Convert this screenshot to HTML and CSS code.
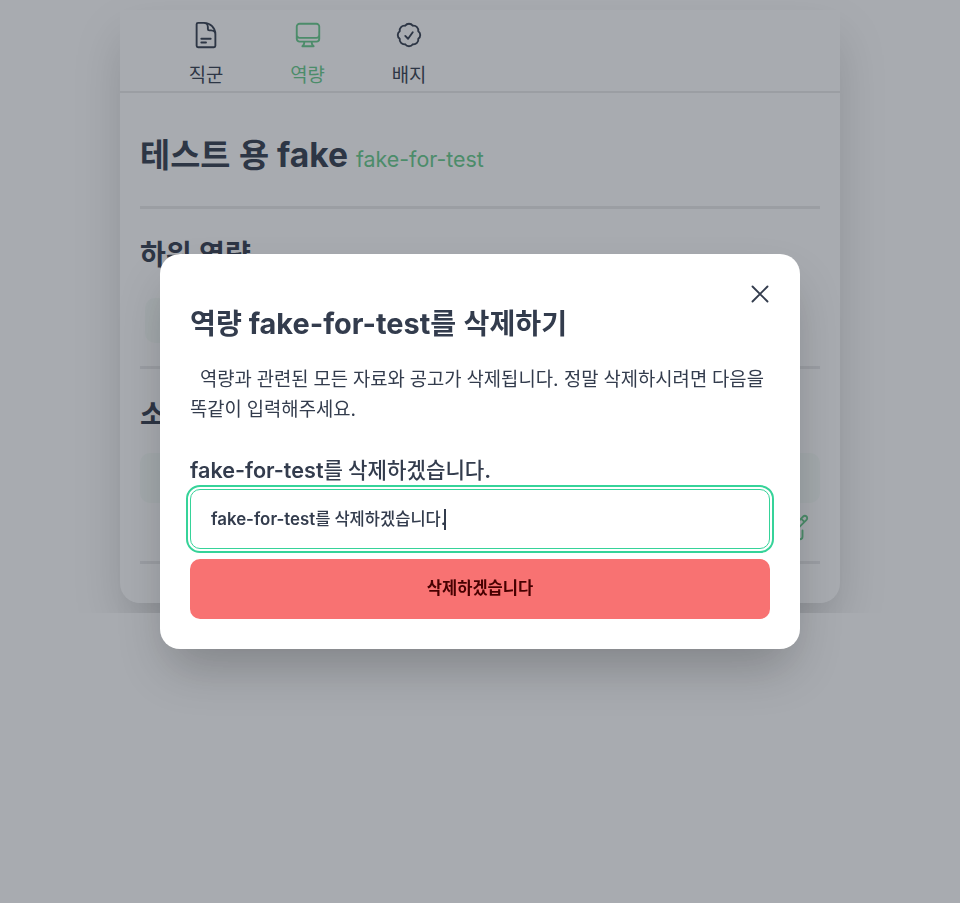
FILE: index.html
```html
<!DOCTYPE html>
<html lang="ko">
<head>
<meta charset="utf-8">
<title>역량</title>
<link rel="stylesheet" href="styles.css">
</head>
<body>
<div class="page">
  <main class="card">
    <nav class="tabs">
      <a class="tab">
        <svg class="icon" viewBox="0 0 24 24"><path d="M19.5 14.25v-2.625a3.375 3.375 0 00-3.375-3.375h-1.5A1.125 1.125 0 0113.5 7.125v-1.5a3.375 3.375 0 00-3.375-3.375H8.25m0 12.75h7.5m-7.5 3H12M10.5 2.25H5.625c-.621 0-1.125.504-1.125 1.125v17.25c0 .621.504 1.125 1.125 1.125h12.75c.621 0 1.125-.504 1.125-1.125V11.25a9 9 0 00-9-9z"/></svg>
        <span class="ko">직군</span>
      </a>
      <a class="tab active">
        <svg class="icon" viewBox="0 0 24 24"><path d="M9 17.25v1.007a3 3 0 01-.879 2.122L7.5 21h9l-.621-.621A3 3 0 0115 18.257V17.25m6-12V15a2.25 2.25 0 01-2.25 2.25H5.25A2.25 2.25 0 013 15V5.25m18 0A2.25 2.25 0 0018.75 3H5.25A2.25 2.25 0 003 5.25m18 0V12a2.25 2.25 0 01-2.25 2.25H5.25A2.25 2.25 0 013 12V5.25"/></svg>
        <span class="ko">역량</span>
      </a>
      <a class="tab">
        <svg class="icon" viewBox="0 0 24 24"><path d="M9 12.75L11.25 15 15 9.75M21 12c0 1.268-.63 2.39-1.593 3.068a3.745 3.745 0 01-1.043 3.296 3.745 3.745 0 01-3.296 1.043A3.745 3.745 0 0112 21c-1.268 0-2.39-.63-3.068-1.593a3.746 3.746 0 01-3.296-1.043 3.745 3.745 0 01-1.043-3.296A3.745 3.745 0 013 12c0-1.268.63-2.39 1.593-3.068a3.745 3.745 0 011.043-3.296 3.746 3.746 0 013.296-1.043A3.746 3.746 0 0112 3c1.268 0 2.39.63 3.068 1.593a3.746 3.746 0 013.296 1.043 3.746 3.746 0 011.043 3.296A3.745 3.745 0 0121 12z"/></svg>
        <span class="ko">배지</span>
      </a>
    </nav>
    <header class="heading">
      <h1><span class="ko">테스트 용</span> fake</h1>
      <span class="slug">fake-for-test</span>
    </header>
    <section class="section children">
      <h2><span class="ko">하위 역량</span></h2>
      <div class="chip"></div>
    </section>
    <section class="section about">
      <h2><span class="ko">소개</span></h2>
      <div class="panel"></div>
      <svg class="icon edit" viewBox="0 0 24 24"><path d="M16.862 4.487l1.687-1.688a1.875 1.875 0 112.652 2.652L10.582 16.07a4.5 4.5 0 01-1.897 1.13L6 18l.8-2.685a4.5 4.5 0 011.13-1.897l8.932-8.931zm0 0L19.5 7.125M18 14v4.75A2.25 2.25 0 0115.75 21H5.25A2.25 2.25 0 013 18.75V8.25A2.25 2.25 0 015.25 6H10"/></svg>
    </section>
    <div class="rule"></div>
  </main>
</div>
<div class="overlay">
  <div class="modal" role="dialog">
    <svg class="icon close" viewBox="0 0 24 24"><path d="M6 18L18 6M6 6l12 12"/></svg>
    <h3><span class="ko">역량</span> fake-for-test<span class="ko">를 삭제하기</span></h3>
    <p><span class="ko">역량과 관련된 모든 자료와 공고가 삭제됩니다</span>. <span class="ko">정말 삭제하시려면 다음을</span><br><span class="ko">똑같이 입력해주세요</span>.</p>
    <div class="label">fake-for-test<span class="ko">를 삭제하겠습니다</span>.</div>
    <div class="input" role="textbox"><span>fake-for-test<span class="ko">를 삭제하겠습니다</span>.</span><i class="caret"></i></div>
    <button class="delete"><span class="ko">삭제하겠습니다</span></button>
  </div>
</div>
</body>
</html>
```

FILE: styles.css
```css
* { box-sizing: border-box; }
body {
  margin: 0;
  background: #fff;
  color: #333c4d;
  font: 400 19.2px/30px Inter, "Noto Sans CJK KR", sans-serif;
}
h1, h2, h3, p { margin: 0; }
.ko {
  font-family: "Noto Sans CJK KR", sans-serif;
  font-size: .98em;
  word-spacing: -.02em;
}
.icon {
  display: block;
  width: 30px;
  height: 30px;
  fill: none;
  stroke: currentColor;
  stroke-width: 1.5;
  stroke-linecap: round;
  stroke-linejoin: round;
}
.page { height: 613px; padding: 10px 120px; overflow: hidden; }
.card {
  height: 593px;
  border-radius: 0 0 20px 20px;
  background: #fff;
  box-shadow: 0 25px 50px -3px rgba(0, 0, 0, .18);
}
.tabs {
  display: flex;
  height: 83px;
  padding: 10px 35.3px 0;
  border-bottom: 2px solid #e9e9ea;
}
.tab {
  display: flex;
  flex-direction: column;
  align-items: center;
  gap: 9px;
  width: 101.5px;
}
.active, .slug, .edit { color: #66cc8a; }
.heading {
  display: flex;
  align-items: baseline;
  gap: 8px;
  height: 113px;
  margin: 0 20px;
  padding-top: 35px;
}
h1 { font-size: 33.6px; line-height: 50px; font-weight: 700; }
h1 .ko { font-size: .975em; word-spacing: -.02em; }
h3 .ko { font-size: .975em; }
.slug { font-size: 21.4px; }
.section { margin: 0 20px; border-top: 3px solid #e9e9ea; }
.section h2 { height: 40px; font-size: 28.7px; line-height: 40px; font-weight: 700; }
.children { height: 160px; padding-top: 24px; }
.chip { width: 120px; height: 45px; margin: 25px 5px 0; border-radius: 10px; background: #f6fcf8; }
.about { height: 195px; padding-top: 24px; }
.panel { height: 50px; margin-top: 20px; border-radius: 10px; background: #f6fcf8; }
.edit { margin: 10px 10px 0 auto; }
.rule { height: 3px; margin: 0 20px; background: #e9e9ea; }
.overlay {
  position: fixed;
  inset: 0;
  display: flex;
  align-items: center;
  justify-content: center;
  background: rgba(37, 45, 57, .4);
}
.modal {
  position: relative;
  width: 640px;
  height: 395px;
  padding: 48px 30px 30px;
  border-radius: 20px;
  background: #fff;
  box-shadow: 0 25px 50px -8px rgba(0, 0, 0, .24);
}
.close { position: absolute; top: 25px; right: 25px; }
.modal h3 { height: 40px; font-size: 28.9px; line-height: 40px; font-weight: 700; }
.modal p { height: 60px; margin-top: 22px; font-size: 19.2px; line-height: 30px; text-indent: 10px; white-space: nowrap; }
.modal p .ko { line-height: 1; }
.label { margin-top: 30px; height: 35px; font-size: 21.6px; font-weight: 600; }
.label .ko, .input .ko { font-weight: 500; word-spacing: -.04em; }
.input {
  display: flex;
  align-items: center;
  height: 60px;
  padding: 0 20px 2px;
  border: 1px solid #36d399;
  border-radius: 10px;
  outline: 2px solid #36d399;
  outline-offset: 2px;
  font-size: 16.87px;
  font-weight: 600;
}
.caret { width: 2px; height: 21px; margin: 2px 0 0 -2px; background: #333c4d; }
.delete {
  display: block;
  width: 100%;
  height: 60px;
  margin-top: 10px;
  padding: 0 0 4px;
  border: 0;
  border-radius: 10px;
  background: #f87272;
  color: #470000;
  font-size: 16.9px;
  font-weight: 600;
}
```
